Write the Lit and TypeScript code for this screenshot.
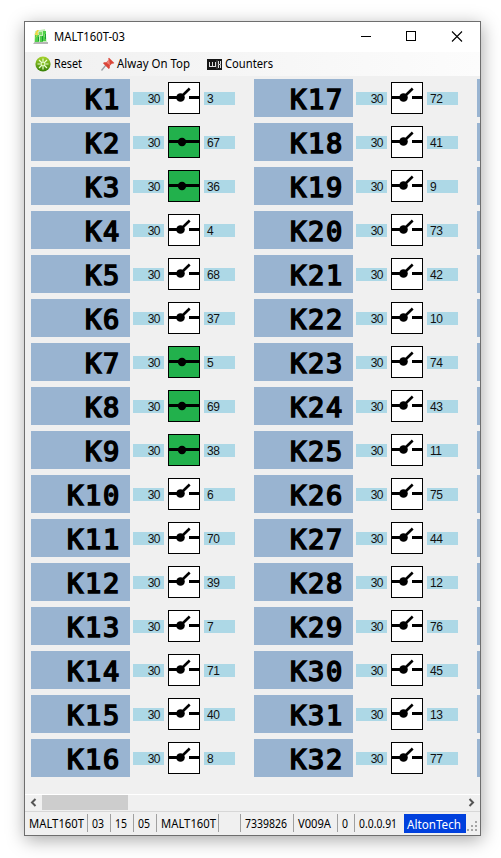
import { LitElement, html, css, svg } from "lit";
import { customElement, property } from "lit/decorators.js";
import { classMap } from "lit/directives/class-map.js";
import { styleMap } from "lit/directives/style-map.js";

interface Relay {
  name: string;
  from: string;
  to: string;
  closed: boolean;
}

const targets = [
  "3", "67", "36", "4", "68", "37", "5", "69", "38", "6", "70", "39", "7", "71", "40", "8",
  "72", "41", "9", "73", "42", "10", "74", "43", "11", "75", "44", "12", "76", "45", "13", "77",
];
const closedRelays = new Set([2, 3, 7, 8, 9]);
const relays: Relay[] = targets.map((to, i) => ({
  name: `K${i + 1}`,
  from: "30",
  to,
  closed: closedRelays.has(i + 1),
}));

@customElement("relay-row")
export class RelayRow extends LitElement {
  @property({ attribute: false }) relay!: Relay;

  static styles = css`
    :host { display: flex; align-items: center; height: 38px; width: 204px; flex: none; }
    .name {
      width: 99px; height: 38px; box-sizing: border-box; padding-right: 9px;
      background: #99b4d1; color: #000; text-align: right;
      font: 27px/42px "DejaVu Sans Mono", monospace; letter-spacing: 1.75px;
      -webkit-text-stroke: 1.6px #000;
    }
    .pin {
      width: 31px; height: 13px; box-sizing: border-box; background: #add8e6;
      font: 12px/14px "Liberation Sans", sans-serif; letter-spacing: -0.5px; color: #111;
    }
    .from { margin-left: 3px; text-align: right; padding-right: 4px; }
    .to { margin-left: 4px; padding-left: 3px; }
    .switch {
      width: 32px; height: 32px; margin-left: 4px; box-sizing: border-box;
      border: 1px solid #000; background: #fff;
    }
    .closed { background: #22b14c; }
    svg { display: block; }
  `;

  render() {
    const r = this.relay;
    return html`
      <div class="name">${r.name}</div>
      <div class="pin from">${r.from}</div>
      <div class=${classMap({ switch: true, closed: r.closed })}>
        <svg width="30" height="30" viewBox="0 0 30 30">
          ${r.closed
            ? svg`<path d="M0 14.5H30" stroke="#000" stroke-width="3"/><circle cx="13" cy="15" r="4.2"/>`
            : svg`<path d="M0 14.5H12M20 14.5H30" stroke="#000" stroke-width="3"/><path d="M12 14L20.7 5.5" stroke="#000" stroke-width="2.5"/><circle cx="11.5" cy="14.5" r="4.3"/>`}
        </svg>
      </div>
      <div class="pin to">${r.to}</div>
    `;
  }
}

const status: [string, number, number][] = [
  ["MALT160T", 59, 55], ["03", 23, 12], ["15", 23, 12], ["05", 23, 12],
  ["MALT160T", 62, 55], ["", 22, 0], ["7339826", 53, 42], ["V009A", 44, 33],
  ["0", 17, 6], ["0.0.0.91", 46, 38],
];

const label = (text: string, width: number) => svg`
  <text x="0" y="13" font-size="12" textLength=${width} lengthAdjust="spacingAndGlyphs">${text}</text>`;

@customElement("app-root")
export class AppRoot extends LitElement {
  static styles = css`
    :host {
      display: block; width: 501px; height: 858px; box-sizing: border-box;
      padding: 21px 20px 22px 24px; background: #fff; overflow: hidden;
      font-family: "Noto Sans", "Open Sans", sans-serif; color: #000;
    }
    svg { display: block; flex: none; overflow: visible; }
    .window {
      width: 457px; height: 815px; box-sizing: border-box; display: flex; flex-direction: column;
      border: 1px solid #6e6e6e; background: #f0f0f0; box-shadow: 1px 4px 17px rgba(0, 0, 0, 0.34);
    }
    .title { height: 30px; background: #fff; display: flex; align-items: center; padding-left: 8px; flex: none; }
    .title .text { margin-left: 5px; }
    .controls { margin-left: auto; display: flex; }
    .tools {
      height: 24px; flex: none; display: flex; align-items: center; padding-left: 10px;
      background: linear-gradient(90deg, #f0f0f0, #fcfcfc);
    }
    .reset { margin-left: 3px; }
    .pinicon { margin-left: 16px; }
    .top { margin-left: 2px; }
    .counter { margin-left: 15px; }
    .counters { margin-left: 3px; }
    .board { flex: 1; min-height: 0; display: flex; gap: 19px; overflow: hidden; padding: 3px 0 0 6px; }
    .column { display: flex; flex-direction: column; gap: 6px; flex: none; }
    .next { width: 99px; height: 38px; background: #99b4d1; }
    .scroll { height: 15px; flex: none; border-top: 1px solid #fff; display: flex; align-items: center; }
    .thumb { width: 86px; height: 15px; background: #cdcdcd; }
    .arrow { width: 17px; height: 15px; }
    .right { margin-left: auto; }
    .status {
      height: 24px; flex: none; box-sizing: border-box; border-top: 1px solid #d7d7d7;
      display: flex; padding: 2px 0 2px 4px; margin-top: 1px;
    }
    .cell { box-sizing: border-box; height: 18px; border-right: 1px solid #a0a0a0; padding: 1px 0 0 4px; }
    .cell.first { padding-left: 0; }
    .cell.last { border-right: 0; }
    .brand { width: 62px; height: 19px; background: #0040dd; margin-left: 3px; padding-left: 3px; box-sizing: border-box; }
    .brand svg { fill: #fff; }
    .grip { margin: 7px 0 0 1px; }
  `;

  render() {
    return html`
      <div class="window">
        <div class="title">
          <svg width="16" height="16" viewBox="0 0 16 16">
            <path d="M2 2L12 0 14 14H1Z" fill="#c4eeb8"/>
            <path d="M2 6H6V13H2ZM7 7H10V13H7ZM10 2H13V12H10Z" fill="#4fd04a"/>
            <path d="M4 1L1.5 6 4 5.5 2 10 6 4 4 4.5 6 1Z" fill="#f4d43a"/>
            <path d="M6 3H9V6H6ZM11 5H13V8H11Z" fill="#79df66"/>
            <path d="M5.5 8V12M9.5 7V12M12.5 5V10" stroke="#1d9a38"/>
            <path d="M0 14.5L2 13H15V15H1" fill="#b6b6b6"/>
          </svg>
          <svg class="text" width="76" height="18">${label("MALT160T-03", 71)}</svg>
          <div class="controls">
            <svg width="46" height="30"><path d="M1 14.5H11" stroke="#000"/></svg>
            <svg width="46" height="30"><rect x="0.5" y="9.5" width="9" height="9" fill="none" stroke="#000"/></svg>
            <svg width="28" height="30"><path d="M0 9.5L10 19.5M10 9.5L0 19.5" stroke="#000" stroke-width="1.1"/></svg>
          </div>
        </div>
        <div class="tools">
          <svg width="16" height="16" viewBox="0 0 16 16">
            <defs><linearGradient id="g" x2="0" y2="1"><stop stop-color="#a8d52d"/><stop offset="1" stop-color="#347f06"/></linearGradient></defs>
            <circle cx="8" cy="8" r="7.6" fill="url(#g)"/>
            <path d="M8 2.5V13.5M2.5 8H13.5M4 4L12 12M12 4L4 12" stroke="#eaffd0" stroke-width="1.2"/>
            <circle cx="8" cy="8" r="1.2" fill="#8bc52b"/>
          </svg>
          <svg class="reset" width="31" height="18">${label("Reset", 28)}</svg>
          <svg class="pinicon" width="14" height="14" viewBox="0 0 14 14">
            <path d="M0.5 13.5L5 8" stroke="#9aa0a5" stroke-width="1.3"/>
            <path d="M8 0.7L13.3 6 12 6.8 11 6.5 8.8 8.8 8.8 11 7.8 12 2 6.2 3 5.2 5.3 5.2 7.7 2.8 7.2 1.5Z" fill="#da4538"/>
            <path d="M8 2L5.5 5.7 9 8.2" fill="#ef8176"/>
          </svg>
          <svg class="top" width="75" height="18">${label("Alway On Top", 73)}</svg>
          <svg class="counter" width="15" height="11" viewBox="0 0 15 11">
            <rect width="15" height="11" fill="#161616"/>
            <path d="M2.5 3V8M5.5 3V8M8.5 3V8M2 7.5H9M11.5 2V5.5H13.5V9M13.5 2V5M11.5 6V9" fill="none" stroke="#ddd"/>
            <path d="M10 1V10" stroke="#777" stroke-width=".6"/>
          </svg>
          <svg class="counters" width="50" height="18">${label("Counters", 48)}</svg>
        </div>
        <div class="board">
          ${[0, 16].map((start) => html`<div class="column">
            ${relays.slice(start, start + 16).map((r) => html`<relay-row .relay=${r}></relay-row>`)}
          </div>`)}
          <div class="column">${Array.from({ length: 16 }, () => html`<div class="next"></div>`)}</div>
        </div>
        <div class="scroll">
          <svg class="arrow" viewBox="0 0 17 15"><path d="M10.5 4L7 7.5 10.5 11" fill="none" stroke="#555" stroke-width="2"/></svg>
          <div class="thumb"></div>
          <svg class="arrow right" viewBox="0 0 17 15"><path d="M6.5 4L10 7.5 6.5 11" fill="none" stroke="#555" stroke-width="2"/></svg>
        </div>
        <div class="status">
          ${status.map(([text, cell, width], i) => html`
            <div class=${classMap({ cell: true, first: i === 0, last: i === status.length - 1 })} style=${styleMap({ width: `${cell}px` })}>
              ${text ? html`<svg width=${width} height="17">${label(text, width)}</svg>` : ""}
            </div>`)}
          <div class="brand"><svg width="56" height="19"><text x="0" y="15" font-size="12" textLength="54" lengthAdjust="spacingAndGlyphs">AltonTech</text></svg></div>
          <svg class="grip" width="11" height="11" viewBox="0 0 11 11"><path d="M8 0h2v2h-2zM4 4h2v2h-2zM8 4h2v2h-2zM0 8h2v2h-2zM4 8h2v2h-2zM8 8h2v2h-2z" fill="#a5a5a5"/></svg>
        </div>
      </div>
    `;
  }
}
